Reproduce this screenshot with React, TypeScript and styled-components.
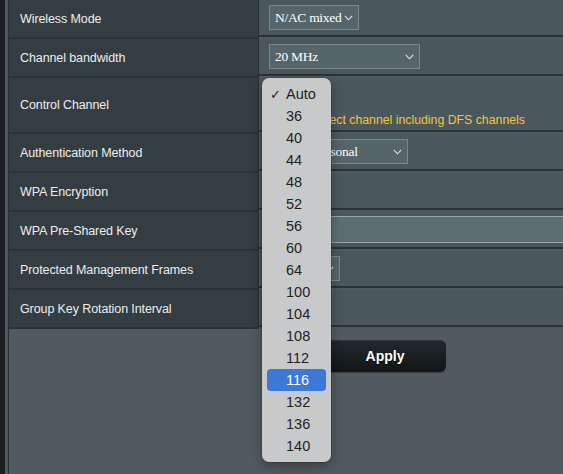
import React from "react";
import styled, { createGlobalStyle } from "styled-components";

const GlobalStyle = createGlobalStyle`
	html, body {
		margin: 0;
		padding: 0;
		background: #525a61;
		overflow: hidden;
	}
	body {
		font-family: "Liberation Sans", Arial, sans-serif;
	}
`;

const Frame = styled.div`
	display: flex;
	min-height: 100vh;
	overflow: hidden;
`;

const SideEdge = styled.div`
	width: 5px;
	flex-shrink: 0;
	background: #1b1f21;
	border-right: 3px solid #50585d;
	box-shadow: 1px 0 0 #2a3034;
`;

const Content = styled.div`
	width: 752px;
	flex-shrink: 0;
	margin-left: 1px;
	display: flex;
	flex-direction: column;
`;

const Table = styled.div`
	display: grid;
	grid-template-columns: 250px 1fr;
`;

const LabelCell = styled.div<{ $tall?: boolean }>`
	height: ${(p) => (p.$tall ? 54 : 37)}px;
	display: flex;
	align-items: center;
	padding-left: 11px;
	background: #343d42;
	border-right: 1px solid #2b3236;
	border-bottom: 2px solid #2b3236;
	color: #ededed;
	font-size: 12.5px;
	letter-spacing: -0.1px;
	white-space: nowrap;
`;

const ValueCell = styled.div<{ $tall?: boolean }>`
	position: relative;
	height: ${(p) => (p.$tall ? 54 : 37)}px;
	display: flex;
	flex-direction: column;
	justify-content: ${(p) => (p.$tall ? "flex-start" : "center")};
	padding: ${(p) => (p.$tall ? "7px" : "0")} 0 0 10px;
	box-sizing: border-box;
	background: #4a575c;
	border-bottom: 2px solid #2b3236;
`;

const SelectBox = styled.div<{ $width: number }>`
	width: ${(p) => p.$width}px;
	height: 25px;
	box-sizing: border-box;
	display: flex;
	align-items: center;
	justify-content: space-between;
	padding: 0 5px 0 5px;
	background: #566569;
	border: 1px solid #7b898d;
	color: #ffffff;
	font-family: "Liberation Serif", "Times New Roman", serif;
	font-size: 13.5px;
	letter-spacing: -0.3px;
	white-space: nowrap;
`;

const Chevron = styled.svg`
	width: 9px;
	height: 6px;
	flex-shrink: 0;
	margin-left: 3px;
`;

const TextInput = styled.div`
	width: 480px;
	height: 27px;
	box-sizing: border-box;
	display: flex;
	align-items: center;
	padding-left: 5px;
	background: #5d6e72;
	border: 1px solid #9aa6a9;
	color: #ffffff;
	font-family: "Liberation Serif", "Times New Roman", serif;
	font-size: 14px;
`;

const PlainValue = styled.div`
	color: #ffffff;
	font-size: 12.5px;
	padding-left: 4px;
`;

const CheckLine = styled.label`
	display: flex;
	align-items: center;
	gap: 4px;
	margin-top: 3px;
	color: #f4c63a;
	font-size: 12.3px;
	white-space: nowrap;
`;

const Box = styled.span`
	width: 12px;
	height: 12px;
	box-sizing: border-box;
	border: 1px solid #aab;
	border-radius: 2px;
	background: #fff;
`;

const Footer = styled.div`
	display: flex;
	justify-content: center;
	padding-top: 11px;
`;

const ApplyButton = styled.button`
	width: 122px;
	height: 32px;
	border: none;
	border-radius: 6px;
	background: linear-gradient(#22292c, #111517);
	box-shadow: inset 0 1px 0 #2e3539, 0 1px 1px rgba(0, 0, 0, 0.3);
	color: #ffffff;
	font-family: "Liberation Sans", Arial, sans-serif;
	font-weight: bold;
	font-size: 14px;
	text-shadow: 0 1px 1px rgba(0, 0, 0, 0.7);
`;

const Menu = styled.div`
	position: absolute;
	left: 3px;
	top: 0;
	z-index: 5;
	width: 69px;
	padding: 5px 0;
	background: #c8c9ca;
	border-radius: 7px;
	box-shadow: 0 4px 12px rgba(0, 0, 0, 0.35), 0 0 0 0.5px rgba(0, 0, 0, 0.2);
`;

const MenuItem = styled.div<{ $active?: boolean }>`
	position: relative;
	height: 22px;
	margin: 0 5px;
	display: flex;
	align-items: center;
	padding-left: 19px;
	border-radius: 4px;
	background: ${(p) => (p.$active ? "#3b78d8" : "transparent")};
	color: ${(p) => (p.$active ? "#ffffff" : "#1f1f1f")};
	font-family: "Liberation Sans", Arial, sans-serif;
	font-size: 14.5px;
`;

const Tick = styled.span`
	position: absolute;
	left: 3px;
	font-size: 13px;
`;

const Select = ({ width, value }: { width: number; value: string }) => (
	<SelectBox $width={width}>
		<span>{value}</span>
		<Chevron viewBox="0 0 9 6">
			<path d="M0.8 0.8 L4.5 4.8 L8.2 0.8" fill="none" stroke="#dfe5e6" strokeWidth="1.1" />
		</Chevron>
	</SelectBox>
);

const channels = ["Auto", "36", "40", "44", "48", "52", "56", "60", "64", "100", "104", "108", "112", "116", "132", "136", "140"];

export default function App() {
	return (
		<>
			<GlobalStyle />
			<Frame>
				<SideEdge />
				<Content>
					<Table>
						<LabelCell>Wireless Mode</LabelCell>
						<ValueCell>
							<Select width={90} value="N/AC mixed" />
						</ValueCell>

						<LabelCell>Channel bandwidth</LabelCell>
						<ValueCell>
							<Select width={151} value="20 MHz" />
						</ValueCell>

						<LabelCell $tall>Control Channel</LabelCell>
						<ValueCell $tall>
							<Select width={58} value="Auto" />
							<CheckLine>
								<Box />
								Auto select channel including DFS channels
							</CheckLine>
							<Menu>
								{channels.map((ch) => (
									<MenuItem key={ch} $active={ch === "116"}>
										{ch === "Auto" && <Tick>✓</Tick>}
										{ch}
									</MenuItem>
								))}
							</Menu>
						</ValueCell>

						<LabelCell>Authentication Method</LabelCell>
						<ValueCell>
							<Select width={139} value="WPA2-Personal" />
						</ValueCell>

						<LabelCell>WPA Encryption</LabelCell>
						<ValueCell>
							<PlainValue>AES</PlainValue>
						</ValueCell>

						<LabelCell>WPA Pre-Shared Key</LabelCell>
						<ValueCell>
							<TextInput>asus1234</TextInput>
						</ValueCell>

						<LabelCell>Protected Management Frames</LabelCell>
						<ValueCell>
							<Select width={71} value="Capable" />
						</ValueCell>

						<LabelCell>Group Key Rotation Interval</LabelCell>
						<ValueCell>
							<PlainValue>3600</PlainValue>
						</ValueCell>
					</Table>
					<Footer>
						<ApplyButton>Apply</ApplyButton>
					</Footer>
				</Content>
			</Frame>
		</>
	);
}
